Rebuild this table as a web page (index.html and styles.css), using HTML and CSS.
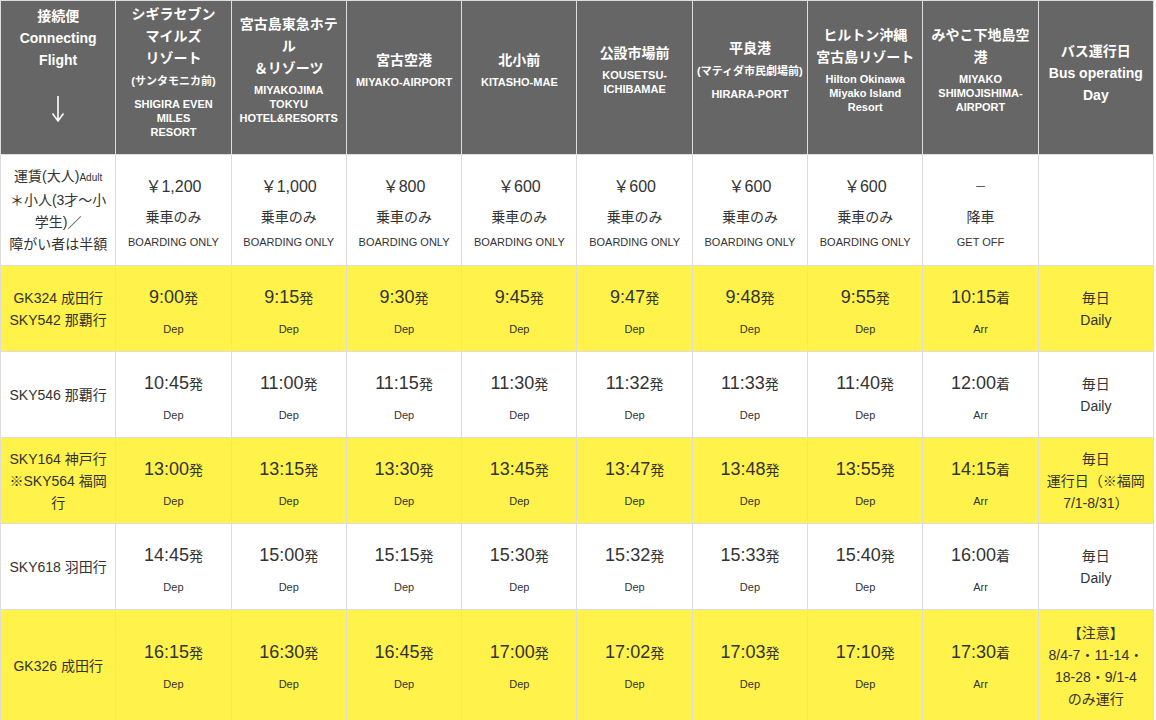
FILE: index.html
```html
<!DOCTYPE html>
<html lang="ja">
<head>
<meta charset="utf-8">
<title>Bus Timetable</title>
<link rel="stylesheet" href="styles.css">
</head>
<body>
<table class="timetable">
  <colgroup>
    <col><col><col><col><col><col><col><col><col><col>
  </colgroup>
  <thead>
    <tr class="head-row">
      <th class="h-tall">
        <div class="h-main">接続便<br>Connecting<br>Flight</div>
        <div class="arrow"><svg width="14" height="28" viewBox="0 0 14 28"><path d="M7 1 V26 M1.5 18.5 L7 26 L12.5 18.5" fill="none" stroke="#fff" stroke-width="1.6"/></svg></div>
      </th>
      <th class="h-tall">
        <div class="h-main">シギラセブン<br>マイルズ<br>リゾート</div>
        <div class="h-sub">(サンタモニカ前)</div>
        <div class="h-en">SHIGIRA EVEN<br>MILES<br>RESORT</div>
      </th>
      <th>
        <div class="h-main">宮古島東急ホテ<br>ル<br>＆リゾーツ</div>
        <div class="h-en">MIYAKOJIMA<br>TOKYU<br>HOTEL&amp;RESORTS</div>
      </th>
      <th>
        <div class="h-main">宮古空港</div>
        <div class="h-en">MIYAKO-AIRPORT</div>
      </th>
      <th>
        <div class="h-main">北小前</div>
        <div class="h-en">KITASHO-MAE</div>
      </th>
      <th>
        <div class="h-main">公設市場前</div>
        <div class="h-en">KOUSETSU-<br>ICHIBAMAE</div>
      </th>
      <th>
        <div class="h-main">平良港</div>
        <div class="h-sub">(マティダ市民劇場前)</div>
        <div class="h-en">HIRARA-PORT</div>
      </th>
      <th>
        <div class="h-main">ヒルトン沖縄<br>宮古島リゾート</div>
        <div class="h-en">Hilton Okinawa<br>Miyako Island<br>Resort</div>
      </th>
      <th>
        <div class="h-main">みやこ下地島空<br>港</div>
        <div class="h-en">MIYAKO<br>SHIMOJISHIMA-<br>AIRPORT</div>
      </th>
      <th class="h-last">
        <div class="h-main">バス運行日<br>Bus operating<br>Day</div>
      </th>
    </tr>
  </thead>
  <tbody>
    <tr class="fare-row">
      <td class="label">運賃(大人)<span class="small">Adult</span><br>＊小人(3才～小<br>学生)／<br>障がい者は半額</td>
      <td class="f"><div class="price">￥1,200</div><div class="note">乗車のみ</div><div class="en">BOARDING ONLY</div></td>
      <td class="f"><div class="price">￥1,000</div><div class="note">乗車のみ</div><div class="en">BOARDING ONLY</div></td>
      <td class="f"><div class="price">￥800</div><div class="note">乗車のみ</div><div class="en">BOARDING ONLY</div></td>
      <td class="f"><div class="price">￥600</div><div class="note">乗車のみ</div><div class="en">BOARDING ONLY</div></td>
      <td class="f"><div class="price">￥600</div><div class="note">乗車のみ</div><div class="en">BOARDING ONLY</div></td>
      <td class="f"><div class="price">￥600</div><div class="note">乗車のみ</div><div class="en">BOARDING ONLY</div></td>
      <td class="f"><div class="price">￥600</div><div class="note">乗車のみ</div><div class="en">BOARDING ONLY</div></td>
      <td class="f"><div class="price"><span class="dash">－</span></div><div class="note">降車</div><div class="en">GET OFF</div></td>
      <td></td>
    </tr>
    <tr class="row yellow">
      <td class="label">GK324 成田行<br>SKY542 那覇行</td>
      <td class="t"><div class="time">9:00<span class="suf">発</span></div><div class="dep">Dep</div></td>
      <td class="t"><div class="time">9:15<span class="suf">発</span></div><div class="dep">Dep</div></td>
      <td class="t"><div class="time">9:30<span class="suf">発</span></div><div class="dep">Dep</div></td>
      <td class="t"><div class="time">9:45<span class="suf">発</span></div><div class="dep">Dep</div></td>
      <td class="t"><div class="time">9:47<span class="suf">発</span></div><div class="dep">Dep</div></td>
      <td class="t"><div class="time">9:48<span class="suf">発</span></div><div class="dep">Dep</div></td>
      <td class="t"><div class="time">9:55<span class="suf">発</span></div><div class="dep">Dep</div></td>
      <td class="t"><div class="time">10:15<span class="suf">着</span></div><div class="dep">Arr</div></td>
      <td class="label">毎日<br>Daily</td>
    </tr>
    <tr class="row">
      <td class="label">SKY546 那覇行</td>
      <td class="t"><div class="time">10:45<span class="suf">発</span></div><div class="dep">Dep</div></td>
      <td class="t"><div class="time">11:00<span class="suf">発</span></div><div class="dep">Dep</div></td>
      <td class="t"><div class="time">11:15<span class="suf">発</span></div><div class="dep">Dep</div></td>
      <td class="t"><div class="time">11:30<span class="suf">発</span></div><div class="dep">Dep</div></td>
      <td class="t"><div class="time">11:32<span class="suf">発</span></div><div class="dep">Dep</div></td>
      <td class="t"><div class="time">11:33<span class="suf">発</span></div><div class="dep">Dep</div></td>
      <td class="t"><div class="time">11:40<span class="suf">発</span></div><div class="dep">Dep</div></td>
      <td class="t"><div class="time">12:00<span class="suf">着</span></div><div class="dep">Arr</div></td>
      <td class="label">毎日<br>Daily</td>
    </tr>
    <tr class="row yellow">
      <td class="label">SKY164 神戸行<br>※SKY564 福岡<br>行</td>
      <td class="t"><div class="time">13:00<span class="suf">発</span></div><div class="dep">Dep</div></td>
      <td class="t"><div class="time">13:15<span class="suf">発</span></div><div class="dep">Dep</div></td>
      <td class="t"><div class="time">13:30<span class="suf">発</span></div><div class="dep">Dep</div></td>
      <td class="t"><div class="time">13:45<span class="suf">発</span></div><div class="dep">Dep</div></td>
      <td class="t"><div class="time">13:47<span class="suf">発</span></div><div class="dep">Dep</div></td>
      <td class="t"><div class="time">13:48<span class="suf">発</span></div><div class="dep">Dep</div></td>
      <td class="t"><div class="time">13:55<span class="suf">発</span></div><div class="dep">Dep</div></td>
      <td class="t"><div class="time">14:15<span class="suf">着</span></div><div class="dep">Arr</div></td>
      <td class="label">毎日<br>運行日（※福岡<br>7/1-8/31）</td>
    </tr>
    <tr class="row">
      <td class="label">SKY618 羽田行</td>
      <td class="t"><div class="time">14:45<span class="suf">発</span></div><div class="dep">Dep</div></td>
      <td class="t"><div class="time">15:00<span class="suf">発</span></div><div class="dep">Dep</div></td>
      <td class="t"><div class="time">15:15<span class="suf">発</span></div><div class="dep">Dep</div></td>
      <td class="t"><div class="time">15:30<span class="suf">発</span></div><div class="dep">Dep</div></td>
      <td class="t"><div class="time">15:32<span class="suf">発</span></div><div class="dep">Dep</div></td>
      <td class="t"><div class="time">15:33<span class="suf">発</span></div><div class="dep">Dep</div></td>
      <td class="t"><div class="time">15:40<span class="suf">発</span></div><div class="dep">Dep</div></td>
      <td class="t"><div class="time">16:00<span class="suf">着</span></div><div class="dep">Arr</div></td>
      <td class="label">毎日<br>Daily</td>
    </tr>
    <tr class="row row-last yellow">
      <td class="label">GK326 成田行</td>
      <td class="t"><div class="time">16:15<span class="suf">発</span></div><div class="dep">Dep</div></td>
      <td class="t"><div class="time">16:30<span class="suf">発</span></div><div class="dep">Dep</div></td>
      <td class="t"><div class="time">16:45<span class="suf">発</span></div><div class="dep">Dep</div></td>
      <td class="t"><div class="time">17:00<span class="suf">発</span></div><div class="dep">Dep</div></td>
      <td class="t"><div class="time">17:02<span class="suf">発</span></div><div class="dep">Dep</div></td>
      <td class="t"><div class="time">17:03<span class="suf">発</span></div><div class="dep">Dep</div></td>
      <td class="t"><div class="time">17:10<span class="suf">発</span></div><div class="dep">Dep</div></td>
      <td class="t"><div class="time">17:30<span class="suf">着</span></div><div class="dep">Arr</div></td>
      <td class="label">【注意】<br>8/4-7・11-14・<br>18-28・9/1-4<br>のみ運行</td>
    </tr>
  </tbody>
</table>
</body>
</html>
```

FILE: styles.css
```css
html, body {
  margin: 0;
  padding: 0;
  background: #fff;
}

body {
  font-family: "Liberation Sans", Arial, "Noto Sans CJK JP", sans-serif;
  color: #333;
}

.timetable {
  width: 1154px;
  table-layout: fixed;
  border-collapse: collapse;
}

.timetable th,
.timetable td {
  border: 1px solid #ddd;
  text-align: center;
  vertical-align: middle;
  padding: 0 4px;
}

/* header: cell height + vertical padding = 153 */
.head-row th {
  background: #666;
  color: #fff;
  height: 135px;
  padding: 0 3px 18px;
  font-weight: bold;
}

.head-row .h-tall {
  height: 139px;
  padding-bottom: 14px;
}

.head-row .h-last {
  height: 135px;
  padding: 4px 3px 14px;
}

.h-main {
  font-size: 14px;
  line-height: 22px;
}

.h-sub {
  font-size: 11px;
  line-height: 24px;
  margin-bottom: 2px;
}

.h-en {
  font-size: 11px;
  line-height: 14px;
  margin-top: 4px;
}

.arrow {
  padding: 24px 0 14px;
  height: 28px;
}

.arrow svg {
  display: block;
  margin: 0 auto;
}

/* fare row */
.fare-row td {
  height: 110px;
}

.fare-row .f {
  padding-top: 4px;
  height: 106px;
}

.price {
  font-size: 16px;
  line-height: 24px;
}

.dash {
  font-size: 12px;
}

.note {
  font-size: 14px;
  line-height: 24px;
  margin-top: 6px;
}

.en {
  font-size: 11px;
  line-height: 16px;
  margin-top: 5px;
}

.label {
  font-size: 14px;
  line-height: 22px;
}

.small {
  font-size: 10px;
}

/* timetable rows */
.row td {
  height: 85px;
}

.row .t {
  padding-top: 4px;
  height: 81px;
}

.row-last td {
  height: 112px;
}

.row-last .t {
  padding-top: 0;
  height: 112px;
}

.yellow td {
  background: #fff24a;
}

.time {
  font-size: 18px;
  line-height: 26px;
}

.suf {
  font-size: 14px;
}

.dep {
  font-size: 11px;
  line-height: 18px;
  margin-top: 9px;
}
```
